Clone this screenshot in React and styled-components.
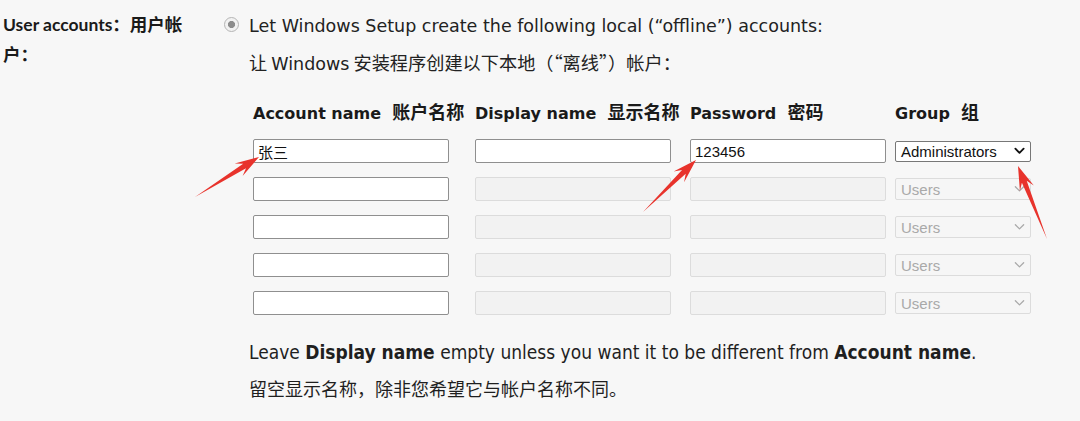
import React from "react";
import styled, { createGlobalStyle } from "styled-components";

const rows = [
  { account: "张三", display: "", password: "123456", group: "Administrators", active: true },
  { account: "", display: "", password: "", group: "Users", active: false },
  { account: "", display: "", password: "", group: "Users", active: false },
  { account: "", display: "", password: "", group: "Users", active: false },
  { account: "", display: "", password: "", group: "Users", active: false },
];

const heads = [
  ["Account name", "账户名称"],
  ["Display name", "显示名称"],
  ["Password", "密码"],
  ["Group", "组"],
];

// 빨간 화살표 (tail -> tip)
const arrows = [
  { x1: 195, y1: 197, x2: 259, y2: 157 },
  { x1: 643, y1: 212, x2: 696, y2: 160 },
  { x1: 1047, y1: 239, x2: 1018, y2: 166 },
];

function arrowPath({ x1, y1, x2, y2 }) {
  const dx = x2 - x1;
  const dy = y2 - y1;
  const len = Math.sqrt(dx * dx + dy * dy);
  const ux = dx / len;
  const uy = dy / len;
  const px = -uy;
  const py = ux;
  const headLen = 24;
  const bx = x2 - ux * headLen;
  const by = y2 - uy * headLen;
  const nx = x2 - ux * (headLen - 7);
  const ny = y2 - uy * (headLen - 7);
  const pts = [
    [x1, y1],
    [nx + px * 2.6, ny + py * 2.6],
    [bx + px * 7.5, by + py * 7.5],
    [x2, y2],
    [bx - px * 7.5, by - py * 7.5],
    [nx - px * 2.6, ny - py * 2.6],
  ];
  return pts.map((p) => p[0].toFixed(1) + "," + p[1].toFixed(1)).join(" ");
}

function Chevron({ muted }) {
  return (
    <ChevronIcon viewBox="0 0 12 8" muted={muted ? 1 : 0}>
      <path d="M1.5 1.5 L6 6 L10.5 1.5" fill="none" strokeWidth={muted ? 1.4 : 2} />
    </ChevronIcon>
  );
}

function App() {
  return (
    <Page>
      <GlobalStyle />
      <Section>
        <Label>User accounts：用户帐户：</Label>
        <Radio />
        <Body>
          <Line>Let Windows Setup create the following local (“offline”) accounts:</Line>
          <LineCn>
            让 <span>Windows</span> 安装程序创建以下本地（“离线”）帐户：
          </LineCn>
          <Table>
            {heads.map(([en, cn]) => (
              <Head key={en}>
                {en}&nbsp; <Cn>{cn}</Cn>
              </Head>
            ))}
            {rows.map((row, i) => (
              <React.Fragment key={i}>
                <Field readOnly value={row.account} />
                <Field readOnly value={row.display} disabled={!row.active} />
                <Field readOnly value={row.password} disabled={!row.active} />
                <Select muted={!row.active}>
                  <span>{row.group}</span>
                  <Chevron muted={!row.active} />
                </Select>
              </React.Fragment>
            ))}
          </Table>
          <Note>
            Leave <b>Display name</b> empty unless you want it to be different from{" "}
            <b>Account name</b>.
          </Note>
          <NoteCn>留空显示名称，除非您希望它与帐户名称不同。</NoteCn>
        </Body>
      </Section>
      <Overlay width="1080" height="421" viewBox="0 0 1080 421">
        {arrows.map((a, i) => (
          <polygon key={i} points={arrowPath(a)} fill="#e8332c" />
        ))}
      </Overlay>
    </Page>
  );
}

const GlobalStyle = createGlobalStyle`
  html, body {
    margin: 0;
    padding: 0;
    background: #f7f7f7;
  }
  body {
    font-family: "DejaVu Sans", "Noto Sans CJK SC", sans-serif;
    color: #1a1a1a;
  }
`;

const Page = styled.div`
  position: relative;
  width: 1080px;
  height: 421px;
  overflow: hidden;
`;

const Section = styled.div`
  display: flex;
  align-items: flex-start;
  padding: 12px 0 0 3px;
`;

const Cn = styled.span`
  font-family: "Noto Sans CJK SC", sans-serif;
  font-size: 18px;
  line-height: 1;
`;

//왼쪽 라벨
const Label = styled.div`
  width: 207px;
  font-family: Lato, "Noto Sans CJK SC", sans-serif;
  font-size: 17.5px;
  font-weight: bold;
  line-height: 30px;
  margin-top: -2px;
  color: #1a1a1a;
`;

const Radio = styled.span`
  box-sizing: border-box;
  width: 15px;
  height: 15px;
  margin: 5px 0 0 14px;
  border-radius: 50%;
  border: 1.5px solid #b5b5b5;
  background: radial-gradient(circle, #8d8d8d 0 3.3px, #f2f2f2 3.8px);
  flex-shrink: 0;
`;

const Body = styled.div`
  display: flex;
  flex-direction: column;
  margin-left: 10px;
`;

const Line = styled.div`
  font-size: 17.5px;
  line-height: 26px;
  height: 26px;
  margin-top: 1px;
  color: #222;
`;

const LineCn = styled.div`
  font-family: "Noto Sans CJK SC", sans-serif;
  font-size: 18.2px;
  line-height: 26px;
  margin-top: 10px;
  color: #222;
  span {
    font-family: "DejaVu Sans", sans-serif;
    font-size: 17.5px;
  }
`;

const Table = styled.div`
  display: grid;
  grid-template-columns: 222px 215px 205px 136px;
  row-gap: 14px;
  align-items: center;
  margin: 25px 0 0 4px;
`;

const Head = styled.div`
  font-size: 16px;
  font-weight: bold;
  line-height: 24px;
  white-space: nowrap;
  margin-bottom: -1px;
  color: #1a1a1a;
`;

const Field = styled.input`
  box-sizing: border-box;
  width: 196px;
  height: 24px;
  margin: 0;
  padding: 1px 4px 0;
  border: 1px solid ${(p) => (p.disabled ? "#dcdcdc" : "#8f8f8f")};
  border-radius: 2px;
  background: ${(p) => (p.disabled ? "#f2f2f2" : "#ffffff")};
  font-family: "Liberation Sans", "Noto Sans CJK SC", sans-serif;
  font-size: 15px;
  color: #111;
  outline: none;
`;

const Select = styled.div`
  box-sizing: border-box;
  display: flex;
  align-items: center;
  justify-content: space-between;
  width: 136px;
  height: ${(p) => (p.muted ? "22px" : "21px")};
  padding: 0 5px 0 5px;
  border: 1px solid ${(p) => (p.muted ? "#dcdcdc" : "#777777")};
  border-radius: 2px;
  background: ${(p) => (p.muted ? "#f6f6f6" : "#ffffff")};
  font-family: "Liberation Sans", sans-serif;
  font-size: 15px;
  color: ${(p) => (p.muted ? "#a9a9a9" : "#111")};
`;

const ChevronIcon = styled.svg`
  width: 11px;
  height: 8px;
  stroke: ${(p) => (p.muted ? "#a9a9a9" : "#111")};
  stroke-linecap: round;
  stroke-linejoin: round;
`;

const Note = styled.div`
  font-family: "DejaVu Sans Condensed", "DejaVu Sans", sans-serif;
  font-size: 19px;
  line-height: 26px;
  margin-top: 24px;
  color: #1f1f1f;
  b {
    font-weight: bold;
  }
`;

const NoteCn = styled.div`
  font-family: "Noto Sans CJK SC", sans-serif;
  font-size: 18px;
  line-height: 26px;
  margin-top: 10px;
  color: #1f1f1f;
`;

const Overlay = styled.svg`
  position: absolute;
  left: 0;
  top: 0;
  pointer-events: none;
`;

export default App;
